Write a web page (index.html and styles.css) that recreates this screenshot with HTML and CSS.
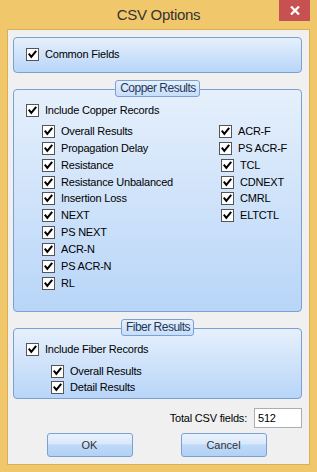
FILE: index.html
```html
<!DOCTYPE html>
<html lang="en">
<head>
    <meta http-equiv="content-type" content="text/html; charset=utf-8"/>
    <title>CSV Options</title>
    <link rel="stylesheet" href="styles.css">
</head>
<body>

<div class="window">
    <div class="titlebar">
        <span class="spacer"></span>
        <span class="title">CSV Options</span>
        <span class="close">
            <svg width="10" height="9" viewBox="0 0 10 9"><path d="M1 0.5 L9 8.5 M9 0.5 L1 8.5" stroke="#fff" stroke-width="2.2" fill="none"/></svg>
        </span>
    </div>

    <div class="client">

        <div class="group common">
            <label class="check"><span class="box"><svg width="11" height="11" viewBox="0 0 11 11"><polyline points="1.8,4.6 4.3,7.8 9.2,1.8" fill="none" stroke="#000" stroke-width="2"/></svg></span>Common Fields</label>
        </div>

        <div class="section">
            <div class="legend">Copper Results</div>
            <div class="group copper">
                <label class="check"><span class="box"><svg width="11" height="11" viewBox="0 0 11 11"><polyline points="1.8,4.6 4.3,7.8 9.2,1.8" fill="none" stroke="#000" stroke-width="2"/></svg></span>Include Copper Records</label>
                <div class="columns">
                    <div class="col">
                        <label class="check"><span class="box"><svg width="11" height="11" viewBox="0 0 11 11"><polyline points="1.8,4.6 4.3,7.8 9.2,1.8" fill="none" stroke="#000" stroke-width="2"/></svg></span>Overall Results</label>
                        <label class="check"><span class="box"><svg width="11" height="11" viewBox="0 0 11 11"><polyline points="1.8,4.6 4.3,7.8 9.2,1.8" fill="none" stroke="#000" stroke-width="2"/></svg></span>Propagation Delay</label>
                        <label class="check"><span class="box"><svg width="11" height="11" viewBox="0 0 11 11"><polyline points="1.8,4.6 4.3,7.8 9.2,1.8" fill="none" stroke="#000" stroke-width="2"/></svg></span>Resistance</label>
                        <label class="check"><span class="box"><svg width="11" height="11" viewBox="0 0 11 11"><polyline points="1.8,4.6 4.3,7.8 9.2,1.8" fill="none" stroke="#000" stroke-width="2"/></svg></span>Resistance Unbalanced</label>
                        <label class="check"><span class="box"><svg width="11" height="11" viewBox="0 0 11 11"><polyline points="1.8,4.6 4.3,7.8 9.2,1.8" fill="none" stroke="#000" stroke-width="2"/></svg></span>Insertion Loss</label>
                        <label class="check"><span class="box"><svg width="11" height="11" viewBox="0 0 11 11"><polyline points="1.8,4.6 4.3,7.8 9.2,1.8" fill="none" stroke="#000" stroke-width="2"/></svg></span>NEXT</label>
                        <label class="check"><span class="box"><svg width="11" height="11" viewBox="0 0 11 11"><polyline points="1.8,4.6 4.3,7.8 9.2,1.8" fill="none" stroke="#000" stroke-width="2"/></svg></span>PS NEXT</label>
                        <label class="check"><span class="box"><svg width="11" height="11" viewBox="0 0 11 11"><polyline points="1.8,4.6 4.3,7.8 9.2,1.8" fill="none" stroke="#000" stroke-width="2"/></svg></span>ACR-N</label>
                        <label class="check"><span class="box"><svg width="11" height="11" viewBox="0 0 11 11"><polyline points="1.8,4.6 4.3,7.8 9.2,1.8" fill="none" stroke="#000" stroke-width="2"/></svg></span>PS ACR-N</label>
                        <label class="check"><span class="box"><svg width="11" height="11" viewBox="0 0 11 11"><polyline points="1.8,4.6 4.3,7.8 9.2,1.8" fill="none" stroke="#000" stroke-width="2"/></svg></span>RL</label>
                    </div>
                    <div class="col">
                        <label class="check"><span class="box"><svg width="11" height="11" viewBox="0 0 11 11"><polyline points="1.8,4.6 4.3,7.8 9.2,1.8" fill="none" stroke="#000" stroke-width="2"/></svg></span>ACR-F</label>
                        <label class="check"><span class="box"><svg width="11" height="11" viewBox="0 0 11 11"><polyline points="1.8,4.6 4.3,7.8 9.2,1.8" fill="none" stroke="#000" stroke-width="2"/></svg></span>PS ACR-F</label>
                        <label class="check shift"><span class="box"><svg width="11" height="11" viewBox="0 0 11 11"><polyline points="1.8,4.6 4.3,7.8 9.2,1.8" fill="none" stroke="#000" stroke-width="2"/></svg></span>TCL</label>
                        <label class="check shift"><span class="box"><svg width="11" height="11" viewBox="0 0 11 11"><polyline points="1.8,4.6 4.3,7.8 9.2,1.8" fill="none" stroke="#000" stroke-width="2"/></svg></span>CDNEXT</label>
                        <label class="check shift"><span class="box"><svg width="11" height="11" viewBox="0 0 11 11"><polyline points="1.8,4.6 4.3,7.8 9.2,1.8" fill="none" stroke="#000" stroke-width="2"/></svg></span>CMRL</label>
                        <label class="check shift"><span class="box"><svg width="11" height="11" viewBox="0 0 11 11"><polyline points="1.8,4.6 4.3,7.8 9.2,1.8" fill="none" stroke="#000" stroke-width="2"/></svg></span>ELTCTL</label>
                    </div>
                </div>
            </div>
        </div>

        <div class="section">
            <div class="legend">Fiber Results</div>
            <div class="group fiber">
                <label class="check"><span class="box"><svg width="11" height="11" viewBox="0 0 11 11"><polyline points="1.8,4.6 4.3,7.8 9.2,1.8" fill="none" stroke="#000" stroke-width="2"/></svg></span>Include Fiber Records</label>
                <div class="sub">
                    <label class="check"><span class="box"><svg width="11" height="11" viewBox="0 0 11 11"><polyline points="1.8,4.6 4.3,7.8 9.2,1.8" fill="none" stroke="#000" stroke-width="2"/></svg></span>Overall Results</label>
                    <label class="check"><span class="box"><svg width="11" height="11" viewBox="0 0 11 11"><polyline points="1.8,4.6 4.3,7.8 9.2,1.8" fill="none" stroke="#000" stroke-width="2"/></svg></span>Detail Results</label>
                </div>
            </div>
        </div>

        <div class="total">
            <span>Total CSV fields:</span>
            <span class="field">512</span>
        </div>

        <div class="buttons">
            <button>OK</button>
            <button>Cancel</button>
        </div>

    </div>
</div>

</body>
</html>
```

FILE: styles.css
```css
body {
    margin: 0;
    font-family: "Liberation Sans", Arial, sans-serif;
    font-size: 11px;
    letter-spacing: -0.2px;
    color: #000;
}

.window {
    width: 317px;
    height: 472px;
    box-sizing: border-box;
    padding: 0 7px 7px 7px;
    background: #f0c86b;
    display: flex;
    flex-direction: column;
}

.titlebar {
    height: 29px;
    display: flex;
    align-items: flex-start;
}

.spacer {
    width: 31px;
}

.title {
    flex: 1;
    text-align: center;
    font-size: 15px;
    line-height: 30px;
    letter-spacing: -0.3px;
    color: #333;
}

.close {
    width: 31px;
    height: 21px;
    background: #c75050;
    display: flex;
    align-items: center;
    justify-content: center;
}

.client {
    flex: 1;
    background: #f0f0f0;
    border: 1px solid #dcaf55;
    padding: 7px 7px 0 5px;
    display: flex;
    flex-direction: column;
}

.group {
    border: 1px solid #7ba0d4;
    border-radius: 4px;
    background: linear-gradient(#e6f0fc, #b8d5f8);
    padding: 12px 12px 0 12px;
}

.common {
    height: 36px;
    box-sizing: border-box;
    padding-top: 8px;
}

.section {
    margin-top: 7px;
    display: flex;
    flex-direction: column;
    align-items: center;
}

.section .group {
    align-self: stretch;
}

.legend {
    position: relative;
    z-index: 1;
    margin-bottom: -8px;
    height: 17px;
    box-sizing: border-box;
    padding: 0 3px 0 4px;
    border: 1px solid #7ba0d4;
    border-radius: 3px;
    background: linear-gradient(#e6f0fc, #c7ddf9);
    font-size: 12px;
    line-height: 15px;
    letter-spacing: -0.5px;
    color: #1e395b;
}

.check {
    display: flex;
    align-items: center;
    height: 17px;
    line-height: 17px;
    white-space: nowrap;
}

.box {
    width: 13px;
    height: 13px;
    box-sizing: border-box;
    border: 1px solid #555;
    background: #fff;
    margin-right: 6px;
    flex: none;
}

.box svg {
    display: block;
}

.columns {
    display: flex;
    margin: 4px 0 0 16px;
    padding-bottom: 19px;
}

.columns .check {
    height: 16.87px;
}

.col:first-child {
    width: 177px;
}

.shift {
    margin-left: 2px;
}

.sub {
    margin: 5px 0 0 25px;
    padding-bottom: 2px;
}

.sub .check {
    height: 16.9px;
}

.total {
    margin-top: 9px;
    display: flex;
    justify-content: flex-end;
    align-items: center;
    gap: 7px;
}

.field {
    width: 48px;
    height: 20px;
    box-sizing: border-box;
    border: 1px solid #abadb3;
    background: #fff;
    padding-left: 3px;
    line-height: 18px;
}

.buttons {
    margin-top: 5px;
    display: flex;
    justify-content: center;
    gap: 48px;
    padding-right: 2px;
}

button {
    width: 86px;
    height: 24px;
    border: 1px solid #7ba0d4;
    border-radius: 3px;
    background: linear-gradient(#eaf3fd, #d8e8fb 45%, #bfd9f8 50%, #b2d1f6);
    font-family: "Liberation Sans", Arial, sans-serif;
    font-size: 11px;
    color: #333;
    padding: 0;
}
```
